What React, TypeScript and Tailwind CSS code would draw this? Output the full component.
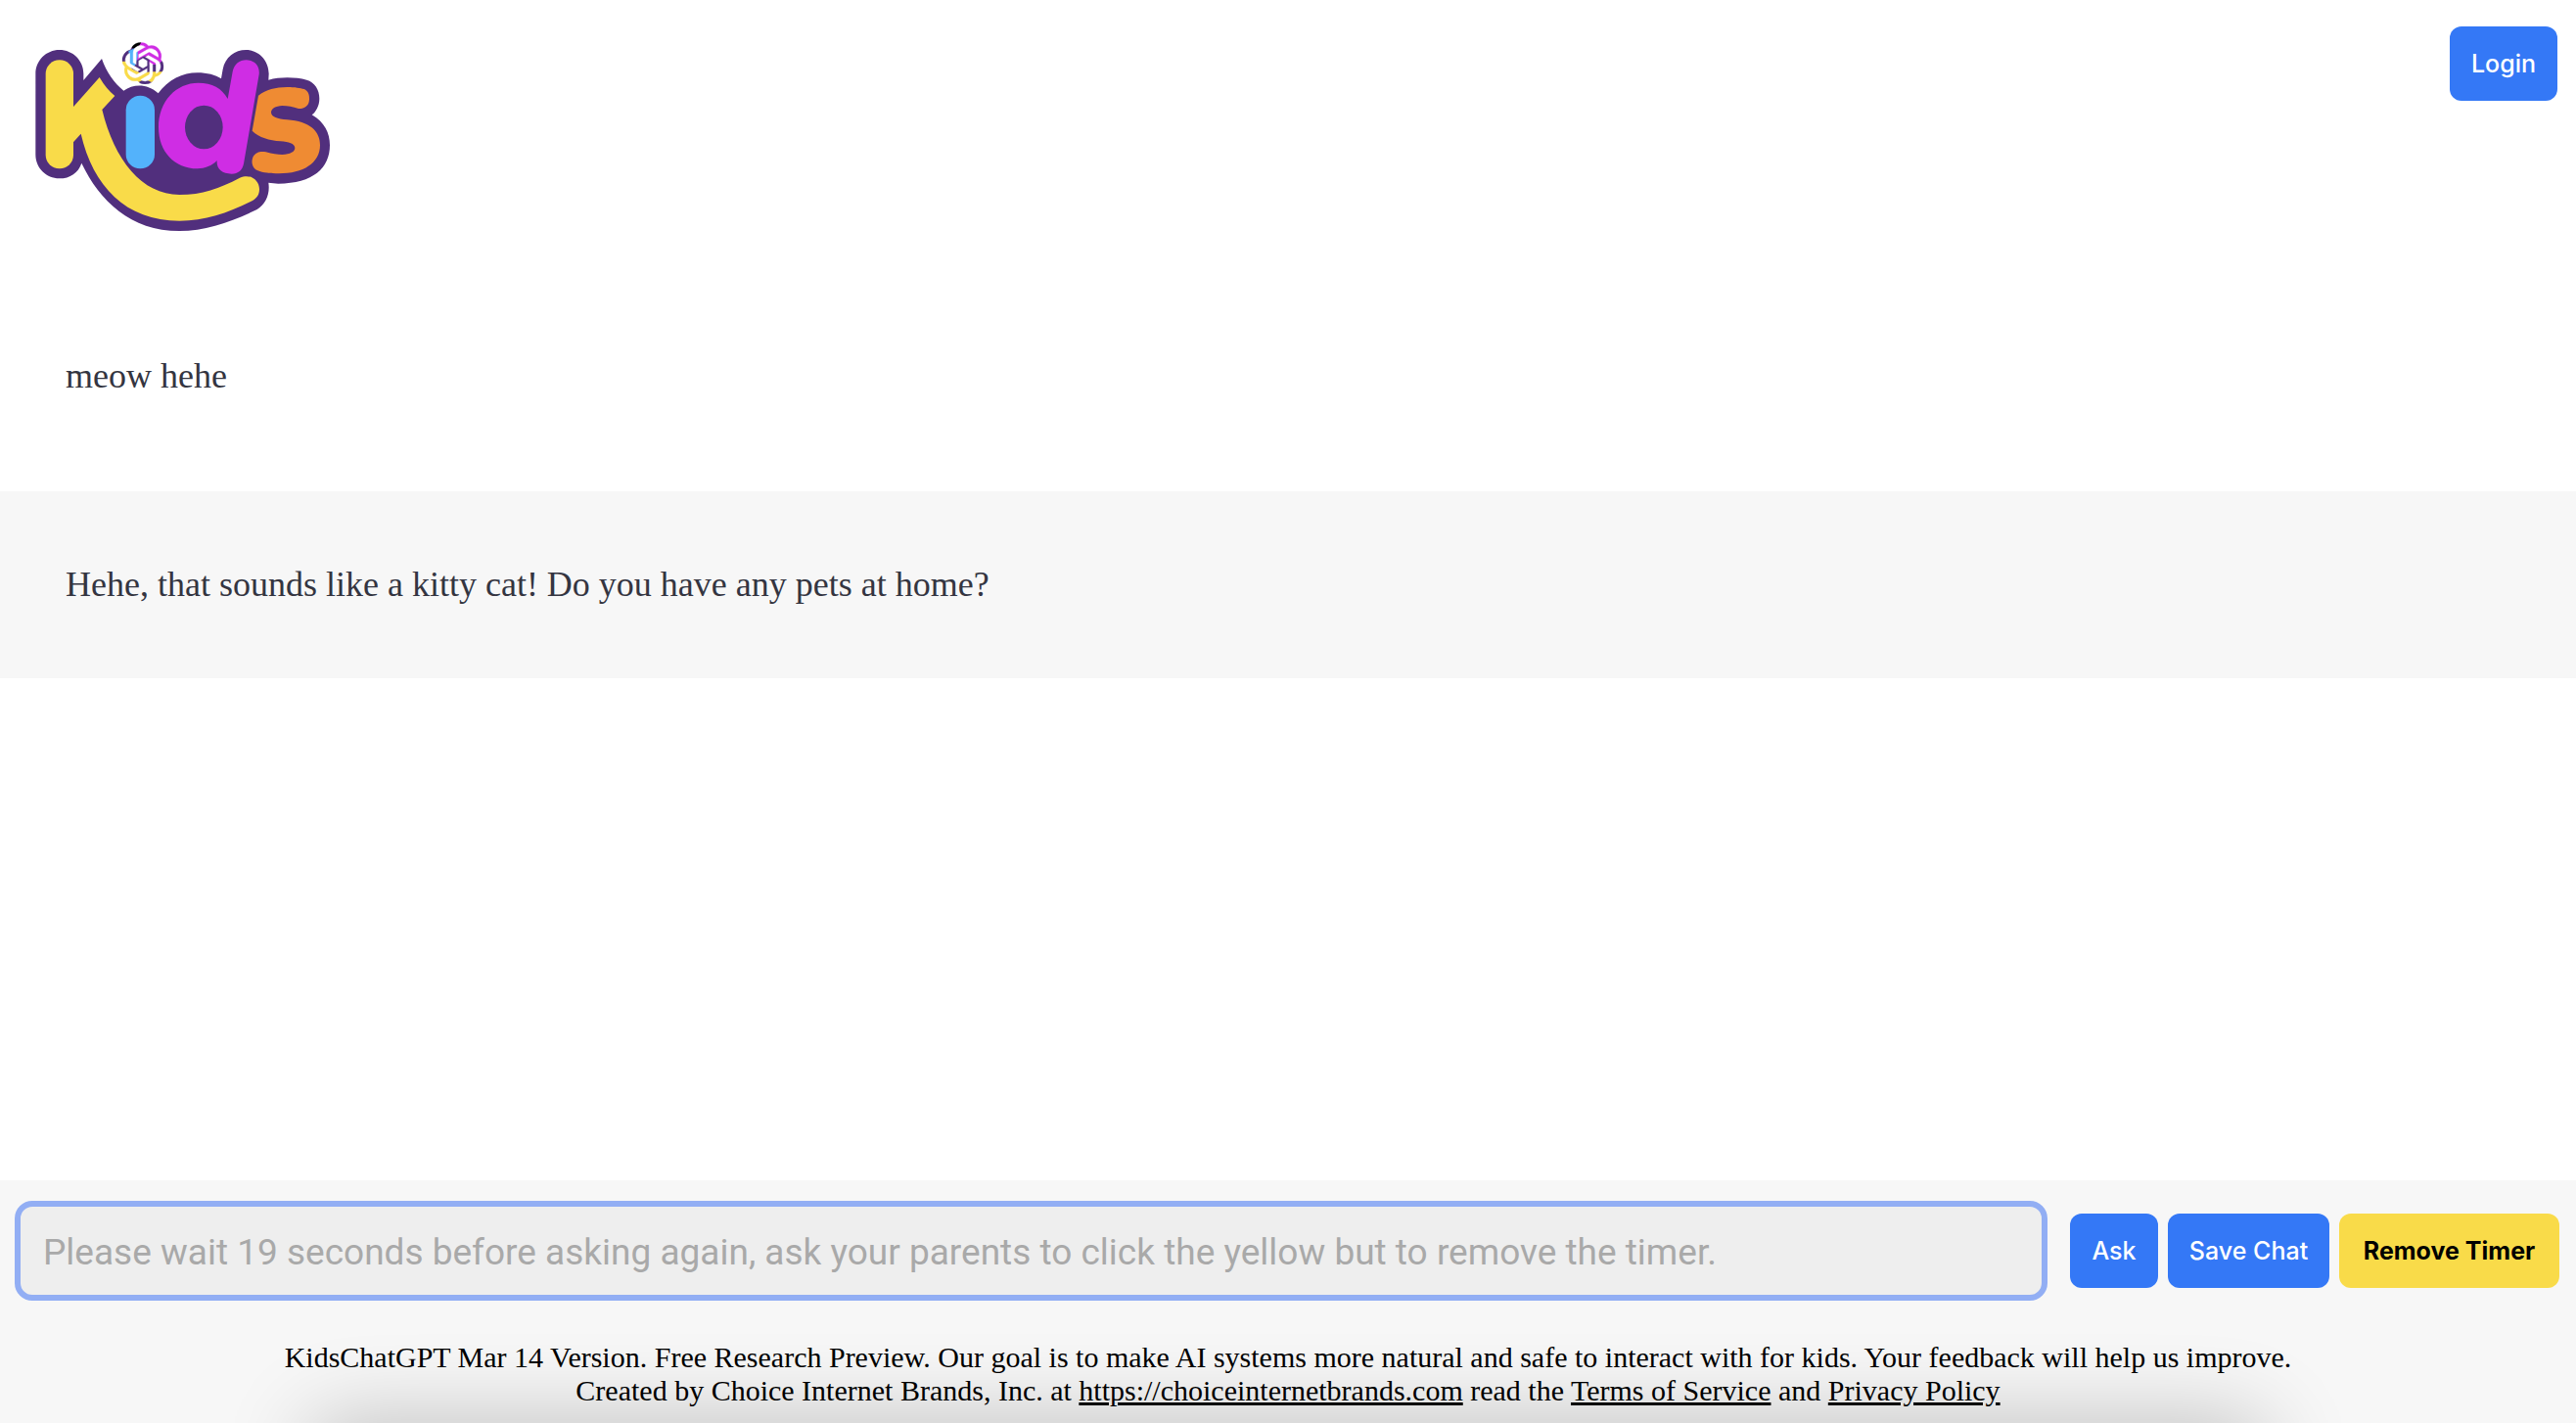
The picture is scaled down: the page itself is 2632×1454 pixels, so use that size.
import React, { useState } from 'react';
import clsx from 'clsx';
import { SiOpenai } from 'react-icons/si';

const messages = [
  { id: 1, fromBot: false, text: 'meow hehe' },
  { id: 2, fromBot: true, text: 'Hehe, that sounds like a kitty cat! Do you have any pets at home?' },
];

const Logo = () => (
  <svg viewBox="0 0 1020 660" className="w-[340px] h-[220px]" role="img" aria-label="Kids">
    <path
      fill="#512f7d"
      d="M49 136C49 95 82 63 122 63C163 63 196 95 196 136V156L252 90C266 130 290 165 319 188C350 166 392 166 425 196C455 155 500 133 545 133C575 133 600 140 618 151L623 122C630 85 660 63 694 63C735 63 764 97 764 136L763 155C800 145 845 146 880 155C905 162 919 185 919 212C919 235 908 253 896 262C935 285 951 318 951 355C951 425 900 473 793 473L763 470C768 505 755 535 728 552C650 590 570 618 490 618C340 618 245 525 190 410C180 440 155 457 122 457C82 457 49 425 49 384Z"
    />
    {/* k with its smile */}
    <rect x="80" y="94" width="85" height="333" rx="42" fill="#f9db49" />
    <path
      fill="#f9db49"
      d="M160 243L245 147Q265 182 292 204L253 246C290 400 375 507 490 507C560 507 612 488 675 455C710 440 735 465 735 490C735 506 728 518 714 525C640 562 570 587 490 587C325 587 225 480 188 320L160 351Z"
    />
    {/* i */}
    <rect x="326" y="203" width="88" height="224" rx="44" fill="#53b2fb" />
    {/* d */}
    <path
      fill="#cf2de4"
      d="M638 213L653 130C658 106 674 94 695 94C720 94 737 112 734 138L687 412C683 432 670 443 650 443C620 443 603 428 605 402C590 418 568 426 545 427C475 427 426 375 426 300C426 220 480 164 548 164C590 164 620 180 638 213Z"
    />
    <ellipse cx="565" cy="300" rx="58" ry="67" fill="#512f7d" />
    {/* s */}
    <path
      fill="#ef8b33"
      d="M732 203C755 185 785 177 820 177C845 177 860 180 872 183C884 188 889 200 888 215C887 235 872 244 855 243C838 238 822 234 805 234C785 235 771 243 771 255C772 268 790 275 820 277C890 282 921 312 921 355C921 410 870 442 795 442C770 442 745 440 730 433C712 425 709 405 716 390C725 375 740 373 755 376C775 382 790 384 805 384C830 383 844 375 844 363C843 350 825 345 800 343C765 340 735 332 713 311Z"
    />
    {/* knot over the i */}
    <mask id="knot" maskUnits="userSpaceOnUse" x="300" y="30" width="160" height="150">
      <SiOpenai x="314" y="40" size={128} color="#fff" strokeWidth={0.2} />
    </mask>
    <g mask="url(#knot)">
      <rect x="312" y="38" width="132" height="132" fill="#512f7d" />
      <path fill="#000" d="M345 38H372V58H345Z" />
      <path fill="#cf2de4" d="M374 38H444V90L424 108L398 108V80L378 84L358 96V64Z" />
      <path fill="#53b2fb" d="M334 66L362 54V84L354 112H340Z" />
      <path fill="#f9db49" d="M312 98H326L346 122L372 134L402 130L444 130V146L404 162L384 152L352 168L312 140Z" />
    </g>
  </svg>
);

type ButtonProps = React.ButtonHTMLAttributes<HTMLButtonElement> & {
  variant?: 'primary' | 'warning';
};

const Button = ({ variant = 'primary', className, ...props }: ButtonProps) => (
  <button
    type="button"
    className={clsx(
      'h-[76px] shrink-0 rounded-xl pt-0.5 text-center text-[25px] whitespace-nowrap',
      variant === 'primary' && 'bg-[#3478f6] font-medium text-white',
      variant === 'warning' && 'bg-[#f9db49] font-bold text-black',
      className
    )}
    {...props}
  />
);

const Message = ({ text, fromBot }: { text: string; fromBot: boolean }) => (
  <div
    className={clsx(
      'px-[67px] py-[74px] font-["Liberation_Serif",serif] text-4xl leading-[43px] text-[#343541]',
      fromBot && 'bg-[#f7f7f7]'
    )}
  >
    {text}
  </div>
);

export default function App() {
  const [question, setQuestion] = useState('');

  return (
    <div className="flex min-h-screen flex-col bg-white font-[Inter,sans-serif]">
      <header className="flex items-start justify-between pt-[27px] pr-[19px] pl-5">
        <a href="#" className="mt-[3px]">
          <Logo />
        </a>
        <Button className="w-[110px]">Login</Button>
      </header>

      <main className="mt-[39px] flex flex-1 flex-col gap-[22px]">
        {messages.map((message) => (
          <Message key={message.id} text={message.text} fromBot={message.fromBot} />
        ))}
      </main>

      <footer className="relative overflow-hidden bg-[#f7f7f7] pt-[21px] pb-4">
        <div className="absolute inset-x-[320px] top-full h-24 shadow-[0_0_90px_rgba(0,0,0,0.24)]" />
        <form className="relative flex items-center pr-[17px] pl-[15px]" onSubmit={(e) => e.preventDefault()}>
          <input
            type="text"
            aria-label="Question"
            value={question}
            onChange={(e) => setQuestion(e.target.value)}
            placeholder="Please wait 19 seconds before asking again, ask your parents to click the yellow but to remove the timer."
            className="mr-[23px] h-[102px] min-w-0 flex-1 rounded-[18px] border-6 border-[#92aef4] bg-[#eeeeee] px-[23px] pt-0.5 font-[Roboto,sans-serif] text-[37px] outline-none placeholder:text-[#a9a9a9]"
          />
          <div className="flex gap-[10px]">
            <Button type="submit" className="w-[90px]">Ask</Button>
            <Button className="w-[165px]">Save Chat</Button>
            <Button variant="warning" className="w-[225px]">Remove Timer</Button>
          </div>
        </form>
        <p className="relative mt-[41px] text-center font-['Liberation_Serif',serif] text-[30px] leading-[34px] text-black">
          KidsChatGPT Mar 14 Version. Free Research Preview. Our goal is to make AI systems more natural and safe to interact with for kids. Your feedback will help us improve.
          <br />
          Created by Choice Internet Brands, Inc. at{' '}
          <a href="https://choiceinternetbrands.com" className="underline">https://choiceinternetbrands.com</a> read the{' '}
          <a href="#terms" className="underline">Terms of Service</a> and{' '}
          <a href="#privacy" className="underline">Privacy Policy</a>
        </p>
      </footer>
    </div>
  );
}
